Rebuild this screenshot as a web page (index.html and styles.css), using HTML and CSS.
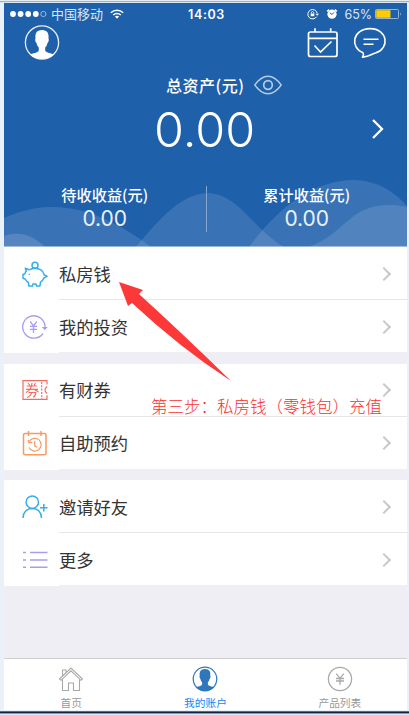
FILE: index.html
```html
<!DOCTYPE html>
<html lang="zh-CN">
<head>
<meta charset="utf-8">
<title>我的账户</title>
<link rel="stylesheet" href="styles.css">
</head>
<body>
<div class="frame">
<main class="phone">
  <section class="hero">
    <svg class="waves" viewBox="0 0 403 244" aria-hidden="true">
      <g fill="#fff" fill-opacity=".12">
        <path d="M0 215C22 205 38 204 51 204C88 205 120 224 147 244H0Z"/>
        <path d="M0 233C14 228 28 231 41 244H0Z" fill-opacity=".14"/>
        <path d="M132 244C156 215 178 190 205 190C236 193 247 224 280 244Z"/>
        <path d="M245 244C272 207 308 177 350 177C376 178 391 190 403 203V244Z"/>
        <path d="M304 244C342 231 344 202 386 202C394 202 399 203 403 204V244Z"/>
      </g>
    </svg>
    <div class="status">
      <span class="carrier">
        <svg width="37" height="8" viewBox="0 0 37 8"><g fill="#fff"><circle cx="3" cy="4" r="2.9"/><circle cx="10.6" cy="4" r="2.9"/><circle cx="18.2" cy="4" r="2.9"/><circle cx="25.8" cy="4" r="2.9"/></g><circle cx="33.4" cy="4" r="2.6" fill="none" stroke="#b9cee8" stroke-width=".8"/></svg>
        <span class="carrier-name">中国移动</span>
        <svg class="wifi" width="14" height="10" viewBox="0 0 14 10" fill="none" stroke="#fff" stroke-width="1.5"><path d="M.8 3.7C4.3.3 9.7.3 13.2 3.7M3.2 6C5.3 4 8.7 4 10.8 6"/><path d="M4.9 7.5Q7 6 9.1 7.5L7 9.8Z" fill="#fff" stroke="none"/></svg>
      </span>
      <span class="clock">14:03</span>
      <span class="power">
        <svg width="12" height="12" viewBox="0 0 12 12" fill="none" stroke="#fff"><path d="M9.6 8.7A4.7 4.7 0 1 1 10.2 5.3"/><path d="M8.5 5.7H12L10.2 7.8Z" fill="#fff" stroke="none"/><path d="M3.7 5.5H7.3V8.2H3.7Z" fill="#fff" stroke="none"/><path d="M4.3 5.5V4.3Q5.5 2.7 6.7 4.3V5.5" stroke-width=".9"/></svg>
        <svg class="alarm" width="12" height="12" viewBox="0 0 12 12"><circle cx="6" cy="6.2" r="4.6" fill="#fff"/><path d="M1.2 3.4L3.2 1.6M8.8 1.6L10.8 3.4" stroke="#fff" stroke-width="1.6"/><path d="M3.8 4.8L6 6.5L8 4.3" fill="none" stroke="#1f60ab"/></svg>
        <span class="percent">65%</span>
        <svg width="27" height="10" viewBox="0 0 27 10"><rect x=".5" y=".5" width="23" height="9" rx="1" fill="none" stroke="#b4c8e2" stroke-width=".8"/><rect x="1.2" y="1.2" width="14.3" height="7.6" fill="#ffcb05"/><path d="M25 3.3Q26.6 5 25 6.7Z" fill="#b4c8e2"/></svg>
      </span>
    </div>
    <header class="toolbar">
      <svg width="36" height="36" viewBox="0 0 36 36"><circle cx="18" cy="17.5" r="16.6" fill="none" stroke="#e8eff8" stroke-width="1.3"/><path d="M18 5C12.7 5 11 8.6 11.5 13L11.2 15C11.3 17 12.2 17.4 12.6 18.3C13 20.5 14 21.7 14.8 22.6V25.5C14 28 8.3 28.1 6 29.5Q11 34 18 34T30 29.5C27.7 28.1 22 28 21.2 25.5V22.6C22 21.7 23 20.5 23.4 18.3C23.8 17.4 24.7 17 24.8 15L24.5 13C25 8.6 23.3 5 18 5Z" fill="#fff"/></svg>
      <span class="tools">
        <svg width="32" height="32" viewBox="0 0 32 32" fill="none" stroke="#fff" stroke-width="1.7"><rect x="1.5" y="5" width="28.5" height="24.5" rx="2"/><path d="M1.5 11.3H30M8 1.2V5M23.7 1.2V5"/><path d="M7.5 18.5L13.5 25L24.5 14.5"/></svg>
        <svg width="34" height="32" viewBox="0 0 34 32" fill="none" stroke="#fff" stroke-width="1.6"><path d="M10 25.7C-3 20.5-1 2 17 1.6C35 1.5 37 21.7 22.5 26C18.5 26.9 17.3 29.5 9.5 30.3Q11.3 28 10 25.7Z" stroke-linejoin="round"/><path d="M10.5 12.2H25.5M10.5 17.2H20.5" stroke-width="1.4"/></svg>
      </span>
    </header>
    <div class="total-label"><span>总资产(元)</span><svg width="28" height="20" viewBox="0 0 28 20" fill="none" stroke="#b5cae5" stroke-width="1.4"><path d="M.8 10Q7 1.2 14 1.2T27.2 10Q21 18.8 14 18.8T.8 10Z"/><circle cx="14" cy="10" r="4.3" stroke-width="1.7"/></svg></div>
    <div class="total"><span class="amount">0.00</span><svg width="13" height="22" viewBox="0 0 13 22" fill="none" stroke="#fff" stroke-width="2.3"><path d="M2 2L11 11L2 20"/></svg></div>
    <div class="earnings">
      <div class="earning"><span>待收收益(元)</span><b>0.00</b></div>
      <div class="earning right"><span>累计收益(元)</span><b>0.00</b></div>
    </div>
  </section>

  <section class="group">
    <div class="row"><svg class="icon" viewBox="0 0 26 26" fill="none" stroke="#35aeea" stroke-width="1.5" stroke-linejoin="round"><circle cx="13" cy="4.3" r="3"/><path d="M3.3 7.2L7 8.8Q13 5.5 19 8.8Q21.3 10.3 22.3 14L25 15.3L22 16.8Q21 19.5 18.5 21.2L18 25H14.5L14 23H11L10.5 25H7L6.3 21.5Q4 20 3.2 18L1 17.3V13.5L3 12.8Q3.1 11 4.4 10.2Z"/><circle cx="7.3" cy="13.5" r=".7" fill="#35aeea" stroke="none"/></svg><div class="line"><span>私房钱</span><i></i></div></div>
    <div class="row"><svg class="icon" viewBox="0 0 26 26" fill="none" stroke="#aa9cf0" stroke-width="1.3"><path d="M23 13.5V11.7A11.2 11.2 0 1 0 21 19.5"/><path d="M19.8 13H25.8L22.8 16.3Z" fill="#aa9cf0" stroke="none"/><path d="M8.2 7.5L11.5 12L14.8 7.5M8 12.3H15M8 15.3H15M11.5 12V19"/></svg><div class="line"><span>我的投资</span><i></i></div></div>
  </section>
  <section class="group">
    <div class="row"><svg class="icon" viewBox="0 0 26 26" fill="none" stroke="#f36c62" stroke-width="1.2"><path d="M25 7.5V3.6H1V22.4H25V18.3M25 9.5Q21 13 25 16.5"/><path d="M19.7 5V22" stroke-dasharray="2 1.3"/><path d="M6 6L8 8.5M13.5 6L12 8.5M4.8 9H15.2M4 12.3H16M10 6Q9.5 13 4 15.5M12 12.3L16.5 15M6.5 15.5H13.8Q13.8 19 11 20.3M9.5 15.5Q9 19 5 20.5"/></svg><div class="line"><span>有财券</span><i></i></div></div>
    <div class="row"><svg class="icon" viewBox="0 0 26 26" fill="none" stroke="#f69b63" stroke-width="1.5"><rect x="1.5" y="3.5" width="22.5" height="21.3" rx="1.5"/><path d="M6.5 1V6M19 1V6"/><path d="M7.2 11.5A6.4 6.4 0 1 1 7 17.5M6 9.7L7 12.8L10.3 12.3M12.7 11V15.8L15 17.2" stroke-width="1.2"/></svg><div class="line"><span>自助预约</span><i></i></div></div>
  </section>
  <section class="group">
    <div class="row"><svg class="icon" viewBox="0 0 26 26" fill="none" stroke="#35aeea" stroke-width="1.5"><circle cx="10.3" cy="8.2" r="6.2"/><path d="M1 24C1 18.2 5 14.4 10.3 14.4S19.5 18.2 19.5 24M18 13.7H25.5M21.8 10V17.4"/></svg><div class="line"><span>邀请好友</span><i></i></div></div>
    <div class="row"><svg class="icon" viewBox="0 0 26 26" fill="none" stroke="#aa9cf0" stroke-width="1.4"><path d="M1 5.5H4M8 5.5H25.5M1 13H4M8 13H25.5M1 20.3H4M8 20.3H25.5"/></svg><div class="line"><span>更多</span><i></i></div></div>
  </section>

  <nav class="tabs">
    <div class="tab"><svg width="26" height="26" viewBox="0 0 26 26" fill="none" stroke="#a9a9a9" stroke-width="1.1"><path d="M1.5 13L13 2L24.5 13L23 14.3L13 4.8L3 14.3ZM4.5 10V4H8V6.7M4.5 13.5V24.5H10.5V17H15.5V24.5H21.5V13.5"/></svg><span>首页</span></div>
    <div class="tab active"><svg width="26" height="26" viewBox="0 0 36 36"><circle cx="18" cy="18" r="16.3" fill="none" stroke="#2f77bd" stroke-width="1.7"/><path d="M18 4C11.7 4 10 8.6 10.7 13L10.4 15C10.5 17 11.4 17.4 11.8 18.3C12.2 20.5 13.2 21.7 14 22.6V25.5C13 28 8 28 5 29.5Q10 34.5 18 34.5T31 29.5C28 28 23 28 22 25.5V22.6C22.8 21.7 23.8 20.5 24.2 18.3C24.6 17.4 25.5 17 25.6 15L25.3 13C26 8.6 24.3 4 18 4Z" fill="#2f77bd"/></svg><span>我的账户</span></div>
    <div class="tab"><svg width="26" height="26" viewBox="0 0 26 26" fill="none" stroke="#a9a9a9" stroke-width="1.3"><circle cx="13" cy="13" r="11.6"/><path d="M9.2 7.7L13 12.3L16.8 7.7M9 12.5H17M9 15H17M13 12.3V18.7"/></svg><span>产品列表</span></div>
  </nav>
</main>
<svg class="arrow" width="116" height="102" viewBox="0 0 116 102" aria-hidden="true"><path d="M1 1L25 9L21 13Q66 54 113 100Q61 66 14 22L10 25Z" fill="#fc3838"/></svg>
<p class="note">第三步：私房钱（零钱包）充值</p>
</div>
</body>
</html>
```
FILE: styles.css
```css
* { box-sizing: border-box; }
body {
  margin: 0;
  background: #eaf1f9;
  font-family: "Liberation Sans", "Noto Sans CJK SC", sans-serif;
}
svg { display: block; flex: none; }
.frame {
  position: relative;
  height: 715px;
  overflow: hidden;
  padding: 3px 2px 0 4px;
  background: linear-gradient(#e5edf4 0 1px, #9db3c5 1px 2px, #d9e6f0 2px 3px, transparent 3px 711px, #3f6fb4 711px 712px, #14233f 712px 713px, #6fa0da 713px 714px, #dcebf8 714px);
}
.phone {
  display: flex;
  flex-direction: column;
  height: 707px;
  background: #efeef4;
}
.hero {
  position: relative;
  flex: none;
  height: 244px;
  background: #1f60ab;
  color: #fff;
  border-bottom: 1px solid #88a9d3;
}
.waves { position: absolute; left: 0; top: 0; width: 100%; height: 244px; }
.status, .toolbar, .total-label, .total, .earnings { position: relative; }
.status {
  display: grid;
  grid-template-columns: 1fr auto 1fr;
  align-items: center;
  height: 22px;
  padding: 0 5px 0 6px;
  font-size: 12px;
}
.carrier, .power { display: flex; align-items: center; }
.carrier-name { margin-left: 4px; padding-top: 1px; font-size: 13px; line-height: 20px; color: #dbe6f4; }
.wifi { margin-left: 7px; }
.clock { padding-left: 1px; font-family: Inter, sans-serif; font-weight: 600; font-size: 12.5px; letter-spacing: .6px; }
.power { justify-content: flex-end; }
.alarm { margin-left: 7px; }
.percent { margin: 0 3px 0 6px; font: 12.5px Inter, sans-serif; color: #dbe6f4; }
.toolbar { display: flex; justify-content: space-between; height: 36px; padding: 0 20px 0 20px; }
.tools { display: flex; gap: 14px; padding-top: 2px; }
.total-label { display: flex; align-items: center; height: 47px; padding-left: 162px; gap: 10px; font-size: 16px; font-weight: 500; letter-spacing: .5px; }
.total-label span { font-family: "Noto Sans CJK SC", sans-serif; }
.total { display: flex; justify-content: space-between; align-items: center; height: 42px; padding: 0 23px 0 150px; }
.amount { font: 300 48.5px Inter, sans-serif; }
.earnings { display: grid; grid-template-columns: 1fr 1fr; margin-top: 36px; height: 46px; }
.earning { display: flex; flex-direction: column; align-items: center; font: 500 15.2px/17px "Noto Sans CJK SC", sans-serif; }
.earning.right { border-left: 1px solid #83a6d0; }
.earning b { margin-top: 3px; font: 400 21px/26px Inter, sans-serif; color: #eaf1fa; }
.group { flex: none; height: 106px; margin-bottom: 10.5px; background: #fff; }
.row { display: flex; align-items: center; height: 53px; padding-left: 18px; }
.icon { width: 26px; height: 26px; }
.line {
  display: flex;
  flex: 1;
  align-items: center;
  justify-content: space-between;
  height: 53px;
  margin-left: 11px;
  padding: 1px 18px 0 0;
  border-bottom: 1px solid #e3e7ea;
  font: 17.3px/26px "Noto Sans CJK SC", sans-serif;
  color: #333;
}
.row:last-child .line { border-bottom-color: #efeef4; }
.line i { width: 10px; height: 10px; border: solid #c7c7cc; border-width: 2px 2px 0 0; transform: rotate(45deg); }
.tabs {
  display: grid;
  grid-template-columns: repeat(3, 1fr);
  flex: none;
  height: 52px;
  margin-top: auto;
  border-top: 1px solid #cfcfcf;
  background: #fff;
}
.tab { display: flex; flex-direction: column; align-items: center; padding-top: 7px; font: 10.7px/14px "Noto Sans CJK SC", sans-serif; color: #999; }
.tab span { margin-top: 4px; }
.tab.active { color: #1685f8; }
.arrow { position: absolute; left: 118px; top: 281px; }
.note {
  position: absolute;
  left: 151px;
  top: 394px;
  margin: 0;
  font: 300 16.5px/24px "Noto Sans CJK SC", sans-serif;
  white-space: nowrap;
  color: #fa3030;
}
```
